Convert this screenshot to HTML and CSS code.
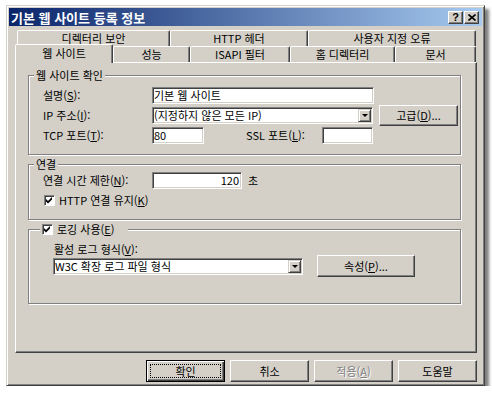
FILE: index.html
```html
<!DOCTYPE html>
<html lang="ko">
<head>
    <meta charset="UTF-8">
    <title>기본 웹 사이트 등록 정보</title>
    <link rel="stylesheet" href="styles.css">
</head>
<body>
    <div class="dialog">
        <div class="titlebar">
            <span class="title">기본 웹 사이트 등록 정보</span>
            <span class="caption-buttons">
                <span class="cap-btn help">?</span>
                <span class="cap-btn">
                    <svg width="8" height="7" viewBox="0 0 8 7"><path d="M0.5 0.5 L7.5 6.5 M7.5 0.5 L0.5 6.5" stroke="#000" stroke-width="1.6"/></svg>
                </span>
            </span>
        </div>

        <div class="client">
            <div class="tab-row back">
                <div class="tab">디렉터리 보안</div>
                <div class="tab">HTTP 헤더</div>
                <div class="tab">사용자 지정 오류</div>
            </div>
            <div class="tab-row front">
                <div class="tab selected">웹 사이트</div>
                <div class="tab">성능</div>
                <div class="tab">ISAPI 필터</div>
                <div class="tab">홈 디렉터리</div>
                <div class="tab">문서</div>
            </div>

            <div class="panel">
                <fieldset class="group group-site">
                    <legend>웹 사이트 확인</legend>
                    <div class="group-body">
                        <div class="row">
                            <span class="lbl">설명(<u>S</u>):</span>
                            <span class="edit edit-desc">기본 웹 사이트</span>
                        </div>
                        <div class="row row-tall">
                            <span class="lbl">IP 주소(<u>I</u>):</span>
                            <span class="edit combo combo-ip">(지정하지 않은 모든 IP)<span class="drop"><i></i></span></span>
                            <span class="btn btn-adv">고급(<u>D</u>)...</span>
                        </div>
                        <div class="row">
                            <span class="lbl">TCP 포트(<u>T</u>):</span>
                            <span class="edit edit-port">80</span>
                            <span class="lbl lbl-ssl">SSL 포트(<u>L</u>):</span>
                            <span class="edit edit-port">&nbsp;</span>
                        </div>
                    </div>
                </fieldset>

                <fieldset class="group group-conn">
                    <legend>연결</legend>
                    <div class="group-body">
                        <div class="row">
                            <span class="lbl">연결 시간 제한(<u>N</u>):</span>
                            <span class="edit edit-timeout">120</span>
                            <span class="unit">초</span>
                        </div>
                        <div class="check-row">
                            <span class="check"><svg width="7" height="7" viewBox="0 0 7 7"><polygon points="0,2 2,4 6,0 6,2.6 2,6.6 0,4.6" fill="#000"/></svg></span>
                            <span>HTTP 연결 유지(<u>K</u>)</span>
                        </div>
                    </div>
                </fieldset>

                <fieldset class="group group-log">
                    <legend>
                        <span class="check"><svg width="7" height="7" viewBox="0 0 7 7"><polygon points="0,2 2,4 6,0 6,2.6 2,6.6 0,4.6" fill="#000"/></svg></span>
                        <span>로깅 사용(<u>E</u>)</span>
                    </legend>
                    <div class="group-body">
                        <div class="log-label">활성 로그 형식(<u>V</u>):</div>
                        <div class="log-row">
                            <span class="edit combo combo-log">W3C 확장 로그 파일 형식<span class="drop"><i></i></span></span>
                            <span class="btn btn-prop">속성(<u>P</u>)...</span>
                        </div>
                    </div>
                </fieldset>
            </div>

            <div class="actions">
                <span class="btn default"><span class="focus">확인</span></span>
                <span class="btn">취소</span>
                <span class="btn disabled">적용(<u>A</u>)</span>
                <span class="btn">도움말</span>
            </div>
        </div>
    </div>
</body>
</html>
```

FILE: styles.css
```css
* {
    box-sizing: border-box;
}
body {
    margin: 0;
    background: #fff;
    font-family: "Noto Sans CJK KR", "Noto Sans", sans-serif;
    font-size: 11px;
    line-height: 13px;
    color: #000;
}
u {
    text-decoration: underline;
    text-underline-offset: 1px;
}

/* window frame */
.dialog {
    width: 479px;
    height: 381px;
    margin: 5px 0 0 6px;
    padding: 2px;
    display: flex;
    flex-direction: column;
    background: #d4d0c8;
    border: 1px solid;
    border-color: #d4d0c8 #404040 #404040 #d4d0c8;
    box-shadow: inset 1px 1px #fff, inset -1px -1px #808080, 4px 4px 3px rgba(0, 0, 0, 0.5);
}
.titlebar {
    height: 18px;
    display: flex;
    align-items: center;
    justify-content: space-between;
    padding: 0 3px 0 2px;
    background: linear-gradient(to right, #0a246a, #a6caf0);
}
.title {
    color: #fff;
    font-weight: bold;
    font-size: 13px;
}
.caption-buttons {
    display: flex;
    gap: 1px;
}
.cap-btn {
    width: 15px;
    height: 13px;
    display: flex;
    align-items: center;
    justify-content: center;
    background: #d4d0c8;
    border: 1px solid;
    border-color: #fff #404040 #404040 #fff;
    box-shadow: inset -1px -1px #808080;
}
.cap-btn.help {
    font-family: "Liberation Sans", sans-serif;
    font-weight: bold;
    font-size: 11px;
    line-height: 11px;
}

.client {
    flex: 1;
    padding: 4px 5px 0 6px;
    display: flex;
    flex-direction: column;
}

/* tabs */
.tab-row {
    display: flex;
    height: 16px;
}
.tab-row.back {
    margin-left: 2px;
}
.tab-row.front {
    align-items: flex-end;
}
.tab {
    height: 16px;
    text-align: center;
    line-height: 15px;
    background: #d4d0c8;
    border: 1px solid;
    border-bottom: none;
    border-color: #fff #404040 transparent #fff;
    border-radius: 2px 2px 0 0;
    box-shadow: inset -1px 0 #808080;
}
.back .tab:nth-child(1) { width: 153px; }
.back .tab:nth-child(2) { width: 138px; }
.back .tab:nth-child(3) { width: 168px; }
.front .tab:nth-child(1) { width: 98px; }
.front .tab:nth-child(2) { width: 77px; }
.front .tab:nth-child(3) { width: 100px; }
.front .tab:nth-child(4) { width: 105px; }
.front .tab:nth-child(5) { width: 81px; }
.tab.selected {
    height: 19px;
    margin-bottom: -1px;
    line-height: 16px;
    position: relative;
    z-index: 1;
}

.panel {
    width: 462px;
    height: 291px;
    padding: 6px 0 0 12px;
    border: 1px solid;
    border-color: #fff #404040 #404040 #fff;
    box-shadow: inset -1px -1px #808080;
}

/* group boxes */
.group {
    width: 433px;
    margin: 0 0 3px;
    padding: 0;
    min-width: 0;
    border: 1px solid #808080;
    box-shadow: inset 1px 1px #fff, 1px 1px #fff;
}
.group legend {
    margin-left: 5px;
    padding: 0 2px;
    background: #d4d0c8;
    line-height: 13px;
}
.group-site .group-body {
    padding: 5px 0 9px 14px;
}
.group-conn .group-body {
    padding: 1px 0 12px 14px;
}
.group-log legend {
    margin-left: 11px;
    padding: 0 14px 0 2px;
    display: flex;
    align-items: center;
    gap: 4px;
    height: 13px;
}
.group-log .group-body {
    padding: 0 0 26px 24px;
}

.row {
    display: flex;
    align-items: center;
    height: 17px;
    margin-bottom: 1px;
}
.row-tall {
    height: 21px;
}
.lbl {
    width: 109px;
    flex: none;
}
.lbl-ssl {
    width: 76px;
    margin-left: 42px;
}

/* edit and combo boxes */
.edit {
    position: relative;
    height: 17px;
    padding: 0 1px;
    line-height: 15px;
    white-space: nowrap;
    background: #fff;
    border: 1px solid;
    border-color: #808080 #fff #fff #808080;
    box-shadow: inset 1px 1px #404040, inset -1px -1px #d4d0c8;
}
.edit-desc { width: 222px; }
.combo-ip { width: 221px; }
.edit-port { width: 52px; }
.lbl-ssl + .edit-port { width: 51px; }
.edit-timeout {
    width: 90px;
    text-align: right;
    padding-right: 2px;
}
.combo-log { width: 250px; }
.unit {
    margin-left: 6px;
}
.drop {
    position: absolute;
    top: 1px;
    right: 1px;
    width: 13px;
    height: 13px;
    display: flex;
    align-items: center;
    justify-content: center;
    background: #d4d0c8;
    border: 1px solid;
    border-color: #d4d0c8 #404040 #404040 #d4d0c8;
    box-shadow: inset 1px 1px #fff, inset -1px -1px #808080;
}
.drop i {
    width: 0;
    height: 0;
    border-left: 3px solid transparent;
    border-right: 3px solid transparent;
    border-top: 3px solid #000;
}

/* buttons */
.btn {
    display: flex;
    align-items: center;
    justify-content: center;
    height: 22px;
    background: #d4d0c8;
    border: 1px solid;
    border-color: #fff #404040 #404040 #fff;
    box-shadow: inset -1px -1px #808080;
    white-space: nowrap;
}
.btn-adv {
    width: 79px;
    height: 21px;
    margin-left: 6px;
}
.btn-prop {
    width: 98px;
    margin-left: 14px;
}
.btn.default {
    border-color: #000;
    box-shadow: inset 1px 1px #fff, inset -1px -1px #404040, inset -2px -2px #808080;
    padding: 3px;
}
.focus {
    flex: 1;
    align-self: stretch;
    display: flex;
    align-items: center;
    justify-content: center;
    border: 1px dotted #000;
}
.btn.disabled {
    color: #808080;
    text-shadow: 1px 1px #fff;
}

/* checkboxes */
.check {
    width: 11px;
    height: 11px;
    flex: none;
    display: flex;
    align-items: center;
    justify-content: center;
    background: #fff;
    border: 1px solid;
    border-color: #808080 #fff #fff #808080;
    box-shadow: inset 1px 1px #404040;
}
.check-row {
    display: flex;
    align-items: center;
    gap: 4px;
    height: 13px;
    margin-top: 5px;
    margin-left: 1px;
}

.log-label {
    margin-top: 7px;
    margin-left: 1px;
    height: 13px;
}
.log-row {
    display: flex;
    align-items: center;
    height: 22px;
    margin-top: -1px;
}

.actions {
    display: flex;
    justify-content: flex-end;
    gap: 5px;
    margin-top: 7px;
}
.actions .btn {
    width: 79px;
}
```
